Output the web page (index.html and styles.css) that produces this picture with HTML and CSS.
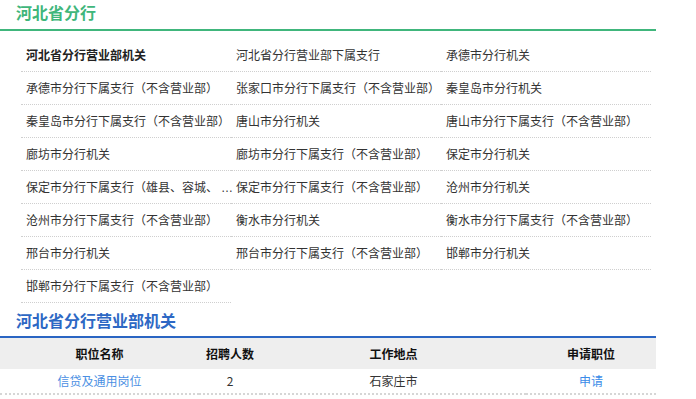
FILE: index.html
```html
<!DOCTYPE html>
<html lang="zh-CN">
<head>
<meta charset="utf-8">
<title>河北省分行</title>
<link rel="stylesheet" href="styles.css">
</head>
<body>
<div class="page">
  <h2 class="title title-green">河北省分行</h2>
  <ul class="units">
    <li class="unit active">河北省分行营业部机关</li>
    <li class="unit">河北省分行营业部下属支行</li>
    <li class="unit">承德市分行机关</li>
    <li class="unit">承德市分行下属支行（不含营业部）</li>
    <li class="unit">张家口市分行下属支行（不含营业部）</li>
    <li class="unit">秦皇岛市分行机关</li>
    <li class="unit">秦皇岛市分行下属支行（不含营业部）</li>
    <li class="unit">唐山市分行机关</li>
    <li class="unit">唐山市分行下属支行（不含营业部）</li>
    <li class="unit">廊坊市分行机关</li>
    <li class="unit">廊坊市分行下属支行（不含营业部）</li>
    <li class="unit">保定市分行机关</li>
    <li class="unit">保定市分行下属支行（雄县、容城、<span class="more">…</span></li>
    <li class="unit">保定市分行下属支行（不含营业部）</li>
    <li class="unit">沧州市分行机关</li>
    <li class="unit">沧州市分行下属支行（不含营业部）</li>
    <li class="unit">衡水市分行机关</li>
    <li class="unit">衡水市分行下属支行（不含营业部）</li>
    <li class="unit">邢台市分行机关</li>
    <li class="unit">邢台市分行下属支行（不含营业部）</li>
    <li class="unit">邯郸市分行机关</li>
    <li class="unit">邯郸市分行下属支行（不含营业部）</li>
  </ul>
  <h2 class="title title-blue">河北省分行营业部机关</h2>
  <table class="jobs">
    <colgroup>
      <col class="c1"><col class="c2"><col class="c3"><col class="c4">
    </colgroup>
    <thead>
      <tr><th>职位名称</th><th>招聘人数</th><th>工作地点</th><th>申请职位</th></tr>
    </thead>
    <tbody>
      <tr><td><a class="link" href="#">信贷及通用岗位</a></td><td>2</td><td>石家庄市</td><td><a class="link apply" href="#">申请</a></td></tr>
    </tbody>
  </table>
</div>
</body>
</html>
```

FILE: styles.css
```css
html, body {
  margin: 0;
  padding: 0;
  background: #fff;
}
body {
  font-family: "Noto Sans CJK SC", "Microsoft YaHei", sans-serif;
  font-size: 12px;
  color: #333;
}
.page {
  width: 656px;
}
.title {
  margin: 0;
  font-size: 16px;
  font-weight: bold;
  line-height: 24px;
  padding-left: 16px;
}
.title-green {
  color: #3fb67b;
  padding-top: 0;
  padding-bottom: 5px;
  border-bottom: 2px solid #40b67c;
}
.title-blue {
  color: #2d68c4;
  padding-top: 5px;
  padding-bottom: 4px;
  border-bottom: 2px solid #2a65c3;
}
.units {
  list-style: none;
  margin: 8px 0 0 21px;
  padding: 0;
  width: 630px;
  display: grid;
  grid-template-columns: repeat(3, 210px);
}
.unit {
  height: 32px;
  line-height: 32px;
  padding-left: 5px;
  border-bottom: 1px dotted #cfcfcf;
  white-space: nowrap;
}
.unit.active {
  font-weight: bold;
  color: #222;
}
.more {
  font-family: "Liberation Sans", Arial, sans-serif;
  margin-left: 3px;
}
.jobs {
  width: 656px;
  border-collapse: collapse;
  table-layout: fixed;
}
.c1 { width: 199px; }
.c2 { width: 62px; }
.c3 { width: 265px; }
.c4 { width: 130px; }
.jobs th {
  background: #eeeeee;
  height: 31px;
  padding: 0;
  font-weight: bold;
  color: #111;
  text-align: center;
  line-height: 31px;
}
.jobs td {
  height: 24px;
  padding: 0;
  line-height: 24px;
  text-align: center;
  color: #333;
  border-bottom: 2px dotted #d6d6d6;
}
.link {
  color: #4a8fe3;
  text-decoration: none;
}
.apply {
  color: #3a8be8;
}
```
